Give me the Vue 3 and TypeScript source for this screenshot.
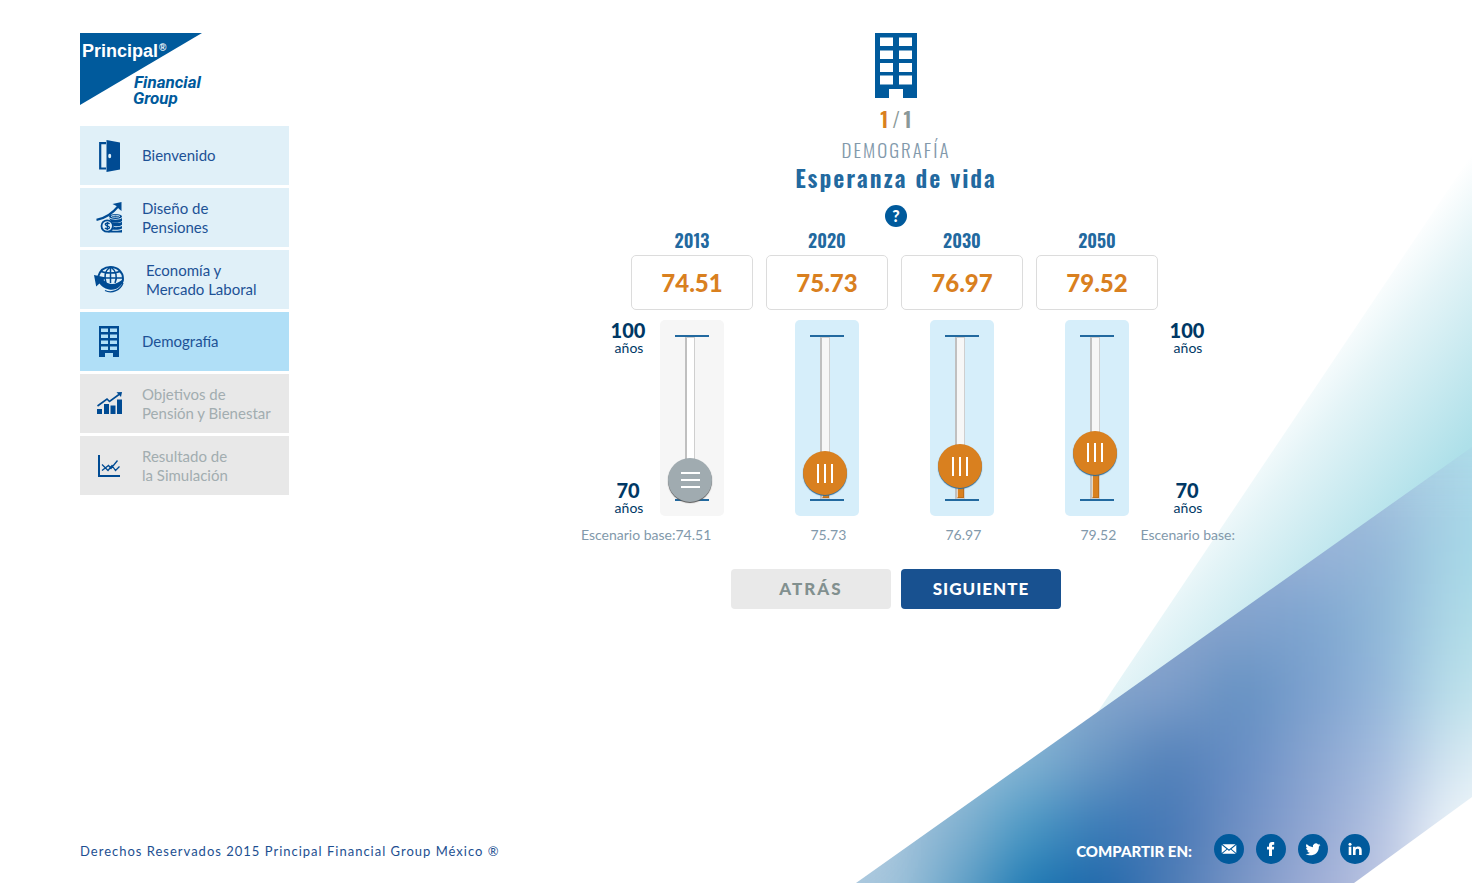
<script setup lang="ts">
import { reactive } from 'vue'

interface MenuItem {
  id: string
  lines: string[]
  state: 'done' | 'active' | 'locked'
}

interface Projection {
  year: number
  value: number
  base: number
  locked: boolean
}

const MIN = 70
const MAX = 100

const menu: MenuItem[] = [
  { id: 'door', lines: ['Bienvenido'], state: 'done' },
  { id: 'coins', lines: ['Diseño de', 'Pensiones'], state: 'done' },
  { id: 'globe', lines: ['Economía y', 'Mercado Laboral'], state: 'done' },
  { id: 'building', lines: ['Demografía'], state: 'active' },
  { id: 'bars', lines: ['Objetivos de', 'Pensión y Bienestar'], state: 'locked' },
  { id: 'lines', lines: ['Resultado de', 'la Simulación'], state: 'locked' },
]

// Colour mesh of the diagonal band: rows from top to bottom, blended by a blur.
const CELL = 70
const mesh: string[][] = [
  ['#9db5d9', '#9db5d9', '#9db5d9', '#9db5d9', '#9db5d9', '#9db5d9', '#9fb8da', '#a6c2de', '#a9d2e5', '#aee0ec'],
  ['#93abd3', '#93abd3', '#93abd3', '#93abd3', '#93abd3', '#95add4', '#99b3d8', '#93b6d8', '#a6d4e6', '#a6dfeb'],
  ['#8da6cd', '#8da6cd', '#8da6cd', '#8da6cd', '#8da6cd', '#83a2cd', '#7ca4cf', '#8fb7d8', '#aed8e7', '#b4e5ea'],
  ['#8db8d6', '#8db8d6', '#8db8d6', '#86a6cd', '#7f9fcb', '#6390c1', '#7ba0ce', '#94b6da', '#b9dfea', '#c8e8ee'],
  ['#a9c6dd', '#9dc2da', '#83b3d3', '#6a97c4', '#5280b8', '#668dc4', '#88a4d0', '#a3bbde', '#d3e6f1', '#e4f3f7'],
  ['#a9c6dd', '#82b1d0', '#4596c3', '#3879b6', '#4677b5', '#6f8fc4', '#90a6d2', '#b4c2e1', '#eef5fa', '#f8fcfd'],
  ['#a5c6dc', '#5f9fc6', '#1574b0', '#1c64a8', '#4d7bb5', '#7a96c6', '#a0aed6', '#bcc4e2', '#f5f9fc', '#ffffff'],
  ['#a5c6dc', '#5f9fc6', '#1574b0', '#1c64a8', '#4d7bb5', '#7a96c6', '#a0aed6', '#bcc4e2', '#f5f9fc', '#ffffff'],
]

const projections = reactive<Projection[]>([
  { year: 2013, value: 74.51, base: 74.51, locked: true },
  { year: 2020, value: 75.73, base: 75.73, locked: false },
  { year: 2030, value: 76.97, base: 76.97, locked: false },
  { year: 2050, value: 79.52, base: 79.52, locked: false },
])

const fillHeight = (p: Projection): string => `${((p.value - MIN) / (MAX - MIN)) * 100}%`

const setValue = (p: Projection, event: Event): void => {
  const next = Number((event.target as HTMLInputElement).value)
  if (!Number.isNaN(next)) p.value = Math.min(MAX, Math.max(MIN, next))
}
</script>

<template>
  <div class="page">
    <svg class="backdrop" viewBox="0 0 640 743" aria-hidden="true">
      <defs>
        <linearGradient id="pale" gradientUnits="userSpaceOnUse" x1="640" y1="14" x2="779" y2="124">
          <stop offset="0" stop-color="#fff" />
          <stop offset=".3" stop-color="#e4f4f7" />
          <stop offset="1" stop-color="#aee0e9" />
        </linearGradient>
        <filter id="blend" filterUnits="userSpaceOnUse" x="-40" y="240" width="760" height="600" color-interpolation-filters="sRGB">
          <feGaussianBlur stdDeviation="30" />
        </filter>
        <clipPath id="band"><path d="M24 743 640 307V657L522 743Z" /></clipPath>
      </defs>
      <path d="M640 14V420L220 640Z" fill="url(#pale)" />
      <g clip-path="url(#band)">
        <g filter="url(#blend)">
          <template v-for="(row, r) in mesh" :key="r">
            <rect
              v-for="(color, c) in row"
              :key="c"
              :x="23 + c * CELL"
              :y="305 + r * CELL"
              :width="CELL + 1"
              :height="CELL + 1"
              :fill="color"
            />
          </template>
          <rect x="-60" y="700" width="84" height="200" fill="#a9c6dd" />
        </g>
      </g>
    </svg>

    <div class="columns">
      <aside class="side">
        <a class="logo" href="#" aria-label="Principal Financial Group">
          <svg width="122" height="76" viewBox="0 0 122 76">
            <path d="M0 0H122L0 72Z" fill="#005a9c" />
            <text class="logo-main" x="2" y="24">Principal</text>
            <text class="logo-mark" x="79" y="18">®</text>
            <text class="logo-sub" x="54" y="55">Financial</text>
            <text class="logo-sub" x="53" y="71">Group</text>
          </svg>
        </a>

        <nav class="menu" aria-label="Secciones">
          <a
            v-for="item in menu"
            :key="item.id"
            href="#"
            class="menu-item"
            :class="[item.state, item.id]"
            :aria-current="item.state === 'active' ? 'step' : undefined"
          >
            <span class="menu-icon">
              <svg v-if="item.id === 'door'" width="22" height="32" viewBox="0 0 22 32">
                <path d="M8 3.2H2.2V28.5H8" fill="none" stroke="#004b93" stroke-width="2.2" />
                <path d="M8.500 0 22 2.5V29.5L8.500 32Z" fill="#004b93" />
                <ellipse cx="11.700" cy="16" rx="1.500" ry="2.200" fill="#e0f0f8" />
              </svg>
              <svg v-else-if="item.id === 'coins'" width="26" height="32" viewBox="0 0 26 32">
                <path d="M.5 17.800C9 16.500 16 12 22.500 4" fill="none" stroke="#004b93" stroke-width="2.200" />
                <path d="M16.500 2 25.500 0 25.500 9 23 7 20.500 4Z" fill="#004b93" />
                <g fill="#004b93">
                  <ellipse cx="19.500" cy="14.500" rx="6.500" ry="2.600" />
                  <path d="M13 16c2 2.300 11 2.300 13 0v3c-2 2.300-9 2.300-11 .6ZM16.500 20.600c3 .9 8 .6 9.500-.8v3c-1.500 1.400-5 1.700-8.500 1.400ZM17.500 25c3 .4 7 0 8.500-1v2.600c-2 1.200-6 1.500-9.500 1ZM15.500 28.400c3 .7 8 .5 10.500-.7V30.500H11.500Z" />
                </g>
                <ellipse cx="19.500" cy="14.300" rx="4.300" ry="1" fill="none" stroke="#e0f0f8" stroke-width=".8" />
                <circle cx="11.200" cy="24" r="5.700" fill="#e0f0f8" stroke="#004b93" stroke-width="1.800" />
                <path d="M13.500 22c-1-1.400-4.300-1.300-4.300.3 0 2 4.300 1.300 4.300 3.300 0 1.600-3.500 1.800-4.600.2M11.300 20v8" fill="none" stroke="#004b93" stroke-width="1.300" />
              </svg>
              <svg v-else-if="item.id === 'globe'" width="30" height="27" viewBox="0 0 30 27">
                <g fill="none" stroke="#004b93" stroke-width="1.500">
                  <path d="M4 11C6 4 11 1 16.500 1 24 1 29 6.500 29 12.500c0 2-.5 3.500-1.200 5" stroke-width="1.900" />
                  <path d="M16.500 1v16M7 5.500c5 2 14 2 19 0M4 12h25M12 17C10 11 11 5 16 1M21 17c2.500-6 1-12-4-16" />
                </g>
                <path d="M0 9 12 11.500 9.500 14C15 20 23 19 29.800 12.500 29 20 22 25 15 23.500 10 22.500 7 20 5.500 17.500L2.200 20.500Z" fill="#004b93" />
                <path d="M11 24.500C18 28 26.500 24 29 17" fill="none" stroke="#004b93" stroke-width="1.300" />
              </svg>
              <svg v-else-if="item.id === 'building'" width="20" height="31" viewBox="0 0 20 31">
                <path
                  fill="#004b93"
                  fill-rule="evenodd"
                  d="M0 0H20V31H14V27H6V31H0ZM2 2.500V6H9V2.500ZM11 2.500V6H18V2.500ZM2 8.500V12H9V8.500ZM11 8.500V12H18V8.500ZM2 14.500V18H9V14.500ZM11 14.500V18H18V14.500ZM2 20.500V24H9V20.500ZM11 20.500V24H18V20.500Z"
                />
              </svg>
              <svg v-else-if="item.id === 'bars'" width="25" height="23" viewBox="0 0 25 23">
                <path d="M0 17H5V22H0ZM7 12H12V22H7ZM13.500 13.500H18.500V22H13.500ZM20 7.500H25V22H20Z" fill="#004b93" />
                <path d="M.5 14 10 7 12.500 9.500 22 2.500" fill="none" stroke="#004b93" stroke-width="1.600" />
                <path d="M19.500.3 25 0 24 5Z" fill="#004b93" />
              </svg>
              <svg v-else width="22" height="22" viewBox="0 0 22 22">
                <path d="M1 0V21H22" fill="none" stroke="#004b93" stroke-width="2" />
                <path d="M4 15.500 10.500 10.500 13 13.500 19.500 5.500M4 9.500 10 15.500 14 10.500 17.500 15.500 21.500 11.500" fill="none" stroke="#004b93" stroke-width="1.300" />
              </svg>
            </span>
            <span class="menu-text">
              <span v-for="line in item.lines" :key="line" class="menu-line">{{ line }}</span>
            </span>
          </a>
        </nav>
      </aside>

      <main class="main">
        <svg class="section-icon" width="42" height="65" viewBox="0 0 42 65" aria-hidden="true">
          <path
            fill="#005a9c"
            fill-rule="evenodd"
            d="M0 0H42V65H28V56H14V65H0ZM5 4.500V13H18V4.500ZM24 4.500V13H37V4.500ZM5 17.500V26H18V17.500ZM24 17.500V26H37V17.500ZM5 30V39H18V30ZM24 30V39H37V30ZM5 42.500V51.500H18V42.500ZM24 42.500V51.500H37V42.500Z"
          />
        </svg>
        <p class="counter"><b class="current">1</b><span>/</span><b>1</b></p>
        <h2 class="section">DEMOGRAFÍA</h2>
        <h1 class="title">Esperanza de vida</h1>
        <button class="help" type="button" aria-label="Ayuda">?</button>

        <form class="chart" @submit.prevent>
          <div class="values">
            <div v-for="p in projections" :key="p.year" class="value">
              <label :for="`value-${p.year}`">{{ p.year }}</label>
              <input
                :id="`value-${p.year}`"
                type="text"
                inputmode="decimal"
                :value="p.value.toFixed(2)"
                :readonly="p.locked"
                @change="setValue(p, $event)"
              />
            </div>
          </div>

          <div class="sliders">
            <div class="scale">
              <p><b>{{ MAX }}</b><span>años</span></p>
              <p><b>{{ MIN }}</b><span>años</span></p>
            </div>
            <div class="panels">
              <div v-for="p in projections" :key="p.year" class="panel" :class="{ locked: p.locked }">
                <div class="ticks"></div>
                <div class="track">
                  <div v-if="!p.locked" class="fill" :style="{ height: fillHeight(p) }"></div>
                </div>
                <input
                  class="range"
                  type="range"
                  :min="MIN"
                  :max="MAX"
                  step="0.01"
                  :value="p.value"
                  :disabled="p.locked"
                  :aria-label="`Esperanza de vida ${p.year}`"
                  @input="setValue(p, $event)"
                />
              </div>
            </div>
            <div class="scale">
              <p><b>{{ MAX }}</b><span>años</span></p>
              <p><b>{{ MIN }}</b><span>años</span></p>
            </div>
          </div>

          <div class="bases">
            <span>Escenario base:</span>
            <div class="base-values">
              <span v-for="p in projections" :key="p.year">{{ p.base.toFixed(2) }}</span>
            </div>
            <span class="base-end">Escenario base:</span>
          </div>

          <div class="actions">
            <button type="button" class="back">ATRÁS</button>
            <button type="submit" class="next">SIGUIENTE</button>
          </div>
        </form>
      </main>
    </div>

    <footer class="footer">
      <p class="rights">Derechos Reservados 2015 Principal Financial Group México ®</p>
      <div class="share">
        <span class="share-label">COMPARTIR EN:</span>
        <a href="#" aria-label="Correo">
          <svg width="30" height="30" viewBox="0 0 30 30">
            <path d="M8.500 10.200H21.500L15 15.500ZM7.700 11 12.500 15 7.700 19ZM22.300 11V19L17.500 15ZM13.300 15.600 15 17 16.700 15.600 21.700 19.800H8.300Z" fill="#fff" />
          </svg>
        </a>
        <a href="#" aria-label="Facebook">
          <svg width="30" height="30" viewBox="0 0 30 30">
            <path d="M13 22V15.500H11V12.700H13V11C13 9 14.200 8 16 8H18.200V10.700H17C16.300 10.700 16 11 16 11.600V12.700H18.200L17.900 15.500H16V22Z" fill="#fff" />
          </svg>
        </a>
        <a href="#" aria-label="Twitter">
          <svg width="30" height="30" viewBox="0 0 30 30">
            <path d="M22.400 10.900c-.5.3-1.100.4-1.700.5.600-.4 1-.9 1.300-1.600-.6.3-1.200.6-1.900.7a3 3 0 0 0-5.200 2.700A8.600 8.600 0 0 1 8.600 10a3 3 0 0 0 .9 4.100c-.5 0-1-.2-1.400-.4 0 1.400 1 2.700 2.500 3-.4.100-.9.100-1.400 0 .4 1.200 1.500 2.100 2.900 2.100A6.100 6.100 0 0 1 7.600 20c4.800 3 13.400 1.100 13.300-7.500.6-.4 1.100-1 1.500-1.600Z" fill="#fff" />
          </svg>
        </a>
        <a href="#" aria-label="LinkedIn">
          <svg width="30" height="30" viewBox="0 0 30 30">
            <circle cx="10" cy="10.200" r="1.500" fill="#fff" />
            <path d="M8.700 12.700H11.300V21H8.700ZM13 12.700H15.500V13.800C16 13 17 12.500 18.300 12.500 21 12.500 21.700 14.200 21.700 16.500V21H19.100V17C19.100 15.700 18.900 14.800 17.600 14.800 16.200 14.800 15.600 15.700 15.600 17V21H13Z" fill="#fff" />
          </svg>
        </a>
      </div>
    </footer>
  </div>
</template>

<style>
body {
  margin: 0;
  background: #fff;
}
</style>

<style scoped>
.page {
  position: relative;
  isolation: isolate;
  display: flex;
  flex-direction: column;
  min-height: 100vh;
  overflow: hidden;
  font-family: Lato, 'Open Sans', sans-serif;
  color: #1d4f91;
}

p,
h1,
h2 {
  margin: 0;
}

button,
input {
  font-family: inherit;
}

.backdrop {
  position: absolute;
  right: 0;
  bottom: 0;
  z-index: -1;
  width: 640px;
  height: 743px;
}

.columns {
  display: grid;
  grid-template-columns: 320px 1fr;
  flex: 1;
}

.side {
  padding: 33px 31px 0 80px;
}

.logo {
  display: block;
  height: 93px;
}

.logo svg {
  display: block;
  overflow: visible;
}

.logo-main {
  fill: #fff;
  font: bold 18px 'Liberation Sans', sans-serif;
}

.logo-mark {
  fill: #fff;
  font: bold 10px 'Liberation Sans', sans-serif;
}

.logo-sub {
  fill: #005a9c;
  font: italic bold 17px Roboto, sans-serif;
}

.menu {
  display: grid;
  gap: 3px;
}

.menu-item {
  display: flex;
  align-items: center;
  height: 59px;
  background: #e0f0f8;
  color: #1d5296;
  font-size: 15px;
  line-height: 19px;
  text-decoration: none;
}

.menu-item.active {
  background: #b0dff7;
}

.menu-item.locked {
  background: #e8e8e8;
  color: #a2adb0;
}

.menu-icon {
  display: flex;
  justify-content: center;
  width: 58px;
  margin-right: 4px;
}

.menu-item.globe .menu-icon {
  margin-right: 8px;
}

.menu-line {
  display: block;
  white-space: nowrap;
}

.main {
  display: flex;
  flex-direction: column;
  align-items: center;
  padding-top: 33px;
}

.counter,
.section,
.title,
.value label {
  font-family: Oswald, 'Open Sans', sans-serif;
}

.counter {
  display: flex;
  gap: 4px;
  margin-top: 7px;
  color: #8a9898;
  font-size: 21px;
  line-height: 28px;
}

.counter span {
  font-weight: 300;
}

.counter b {
  font-weight: 600;
}

.counter .current {
  color: #d9801f;
}

.section {
  color: #8299ab;
  font-size: 19px;
  font-weight: 300;
  line-height: 32px;
  letter-spacing: 2px;
}

.title {
  color: #22699f;
  font-size: 24px;
  font-weight: 600;
  line-height: 24px;
  letter-spacing: 2px;
}

.help {
  width: 22px;
  height: 22px;
  margin-top: 16px;
  padding: 0;
  border: 0;
  border-radius: 50%;
  background: #005a9c;
  color: #fff;
  font-size: 16px;
  font-weight: 900;
  line-height: 22px;
}

.chart {
  width: 680px;
}

.values {
  display: flex;
  gap: 13px;
  padding-left: 75px;
}

.value {
  display: flex;
  flex-direction: column;
  gap: 2px;
  width: 122px;
}

.value label {
  color: #22699f;
  font-size: 18px;
  font-weight: 600;
  line-height: 26px;
  text-align: center;
}

.value input {
  box-sizing: border-box;
  width: 100%;
  height: 55px;
  padding: 0;
  border: 1px solid #dcdcdc;
  border-radius: 5px;
  background: #fff;
  color: #d9801f;
  font-size: 24px;
  font-weight: 900;
  text-align: center;
}

.sliders {
  display: flex;
  margin-top: 10px;
  padding-left: 40px;
}

.scale {
  display: flex;
  flex-direction: column;
  justify-content: space-between;
  width: 64px;
  height: 196px;
  color: #003865;
  text-align: center;
}

.scale b,
.scale span {
  display: block;
}

.scale b {
  font-size: 20px;
  font-weight: 900;
  line-height: 20px;
}

.scale span {
  padding-left: 2px;
  font-size: 14px;
  line-height: 16px;
}

.panels {
  display: flex;
  gap: 71px;
  margin-right: 26px;
}

.panel {
  display: grid;
  justify-items: center;
  width: 64px;
  height: 196px;
  border-radius: 5px;
  background: #d6eefa;
}

.panel.locked {
  background: #f6f6f6;
}

.panel > * {
  grid-area: 1 / 1;
}

.ticks {
  box-sizing: border-box;
  width: 34px;
  height: 166px;
  margin-top: 15px;
  border: solid #22699f;
  border-width: 2px 0;
}

.track {
  box-sizing: border-box;
  display: flex;
  align-items: flex-end;
  width: 10px;
  height: 162px;
  margin: 17px 4px 0 0;
  border: 1px solid #cfcfcf;
  border-left: 2px solid #c0c0c0;
  background: #f7f7f7;
}

.locked .track {
  background: #fff;
}

.fill {
  box-sizing: border-box;
  width: 100%;
  border: 1px solid #c06f18;
  border-left-color: #e8d5bd;
  background: #d9801f;
}

.range {
  appearance: none;
  direction: rtl;
  writing-mode: vertical-lr;
  width: 44px;
  height: 206px;
  margin: 0 4px 0 0;
  background: transparent;
}

.range::-webkit-slider-runnable-track {
  width: 44px;
  background: transparent;
}

.range::-webkit-slider-thumb {
  appearance: none;
  width: 44px;
  height: 44px;
  border: 0;
  border-radius: 50%;
  background:
    linear-gradient(90deg, #fff 2px, transparent 2px 7px, #fff 7px 9px, transparent 9px 14px, #fff 14px) center / 16px 19px no-repeat,
    #d9801f;
  box-shadow: 0 1px 1px #22699f;
}

.range:disabled::-webkit-slider-thumb {
  background:
    linear-gradient(#fff 2px, transparent 2px 7px, #fff 7px 9px, transparent 9px 14px, #fff 14px) center / 19px 16px no-repeat,
    #a0abb0;
  box-shadow: 0 1px 1px #555;
}

.bases {
  display: flex;
  margin-top: 7px;
  padding-left: 25px;
  color: #8299ab;
  font-size: 14px;
  line-height: 24px;
  white-space: nowrap;
}

.base-values {
  display: flex;
  gap: 99px;
}

.base-values span {
  width: 36px;
}

.base-end {
  margin-left: 24px;
}

.actions {
  display: flex;
  justify-content: center;
  gap: 10px;
  margin-top: 22px;
}

.actions button {
  width: 160px;
  height: 40px;
  padding: 0;
  border: 0;
  border-radius: 4px;
  font-size: 17px;
  font-weight: 900;
  line-height: 38px;
}

.actions .back {
  background: #e9e9e9;
  color: #82908f;
  letter-spacing: 2px;
}

.actions .next {
  background: #185190;
  color: #fff;
  letter-spacing: 1px;
}

.footer {
  display: flex;
  align-items: flex-end;
  justify-content: space-between;
  padding: 0 102px 19px 80px;
}

.rights {
  font-size: 13px;
  line-height: 26px;
  letter-spacing: 1px;
}

.share {
  display: flex;
  align-items: flex-end;
  gap: 12px;
}

.share-label {
  margin-right: 10px;
  color: #fff;
  font-size: 15px;
  font-weight: 900;
  line-height: 26px;
}

.share a {
  display: block;
  width: 30px;
  height: 30px;
  border-radius: 50%;
  background: #005a9c;
}
</style>
